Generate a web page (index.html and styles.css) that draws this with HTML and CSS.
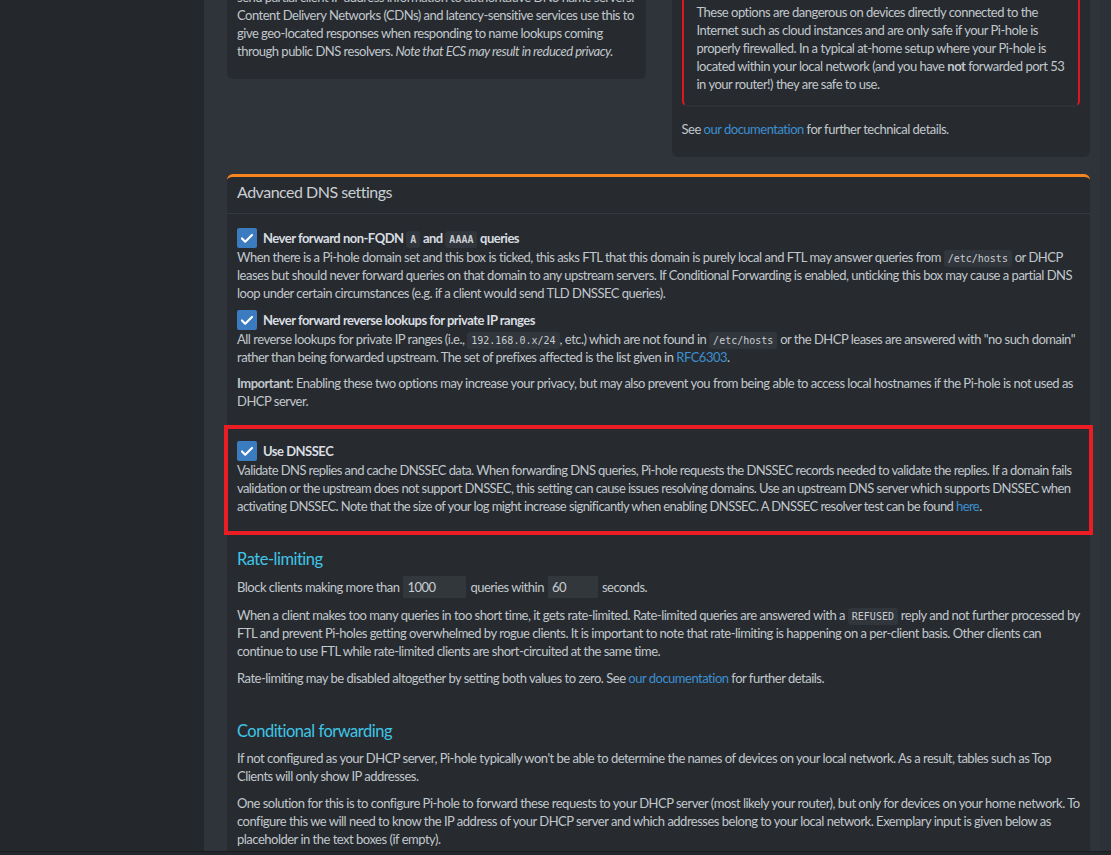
FILE: index.html
```html
<!DOCTYPE html>
<html lang="en">
<head>
    <meta charset="UTF-8">
    <meta name="viewport" content="width=device-width, initial-scale=1.0">
    <title>Settings - DNS</title>
    <link rel="stylesheet" href="styles.css">
</head>
<body>

<aside class="sidebar"></aside>

<main class="content">
    <div class="top-row">
        <div class="box">
            <div class="box-body">
                <div class="check-row">
                    <span class="checkbox"><svg viewBox="0 0 20 20"><path d="M5 10.5l3.2 3.2L15 7" /></svg></span>
                    <label>Use EDNS(0) Client Subnet</label>
                </div>
                <p class="last">send partial client IP address information to authoritative DNS name servers. Content Delivery Networks (CDNs) and latency-sensitive services use this to give geo-located responses when responding to name lookups coming through public DNS resolvers. <em>Note that ECS may result in reduced privacy.</em></p>
            </div>
        </div>

        <div class="box">
            <div class="box-body">
                <div class="callout">
                    <h4>Important</h4>
                    <p>These options are dangerous on devices directly connected to the Internet such as cloud instances and are only safe if your Pi-hole is properly firewalled. In a typical at-home setup where your Pi-hole is located within your local network (and you have <strong>not</strong> forwarded port 53 in your router!) they are safe to use.</p>
                </div>
                <p class="last">See <a href="#">our documentation</a> for further technical details.</p>
            </div>
        </div>
    </div>

    <div class="box box-warning">
        <div class="box-header">
            <h3>Advanced DNS settings</h3>
        </div>
        <div class="box-body">
            <div class="option">
                <div class="check-row">
                    <span class="checkbox"><svg viewBox="0 0 20 20"><path d="M5 10.5l3.2 3.2L15 7" /></svg></span>
                    <label>Never forward non-FQDN <code>A</code> and <code>AAAA</code> queries</label>
                </div>
                <p>When there is a Pi-hole domain set and this box is ticked, this asks FTL that this domain is purely local and FTL may answer queries from <code>/etc/hosts</code> or DHCP leases but should never forward queries on that domain to any upstream servers. If Conditional Forwarding is enabled, unticking this box may cause a partial DNS loop under certain circumstances (e.g. if a client would send TLD DNSSEC queries).</p>
            </div>
            <div class="option">
                <div class="check-row">
                    <span class="checkbox"><svg viewBox="0 0 20 20"><path d="M5 10.5l3.2 3.2L15 7" /></svg></span>
                    <label>Never forward reverse lookups for private IP ranges</label>
                </div>
                <p>All reverse lookups for private IP ranges (i.e., <code>192.168.0.x/24</code>, etc.) which are not found in <code>/etc/hosts</code> or the DHCP leases are answered with "no such domain" rather than being forwarded upstream. The set of prefixes affected is the list given in <a href="#">RFC6303</a>.</p>
            </div>
            <p><strong>Important</strong>: Enabling these two options may increase your privacy, but may also prevent you from being able to access local hostnames if the Pi-hole is not used as DHCP server.</p>

            <div class="option highlight">
                <div class="check-row">
                    <span class="checkbox"><svg viewBox="0 0 20 20"><path d="M5 10.5l3.2 3.2L15 7" /></svg></span>
                    <label>Use DNSSEC</label>
                </div>
                <p>Validate DNS replies and cache DNSSEC data. When forwarding DNS queries, Pi-hole requests the DNSSEC records needed to validate the replies. If a domain fails validation or the upstream does not support DNSSEC, this setting can cause issues resolving domains. Use an upstream DNS server which supports DNSSEC when activating DNSSEC. Note that the size of your log might increase significantly when enabling DNSSEC. A DNSSEC resolver test can be found <a href="#">here</a>.</p>
            </div>

            <div class="setting-group">
                <h4 class="section-title">Rate-limiting</h4>
                <div class="inline-form">
                    Block clients making more than
                    <input type="text" class="num-input" value="1000">
                    queries within
                    <input type="text" class="num-input short" value="60">
                    seconds.
                </div>
                <p>When a client makes too many queries in too short time, it gets rate-limited. Rate-limited queries are answered with a <code>REFUSED</code> reply and not further processed by FTL and prevent Pi-holes getting overwhelmed by rogue clients. It is important to note that rate-limiting is happening on a per-client basis. Other clients can continue to use FTL while rate-limited clients are short-circuited at the same time.</p>
                <p>Rate-limiting may be disabled altogether by setting both values to zero. See <a href="#">our documentation</a> for further details.</p>
            </div>

            <div class="setting-group">
                <h4 class="section-title">Conditional forwarding</h4>
                <p>If not configured as your DHCP server, Pi-hole typically won't be able to determine the names of devices on your local network. As a result, tables such as Top Clients will only show IP addresses.</p>
                <p>One solution for this is to configure Pi-hole to forward these requests to your DHCP server (most likely your router), but only for devices on your home network. To configure this we will need to know the IP address of your DHCP server and which addresses belong to your local network. Exemplary input is given below as placeholder in the text boxes (if empty).</p>
            </div>
        </div>
    </div>
</main>

<div class="scrollbar"></div>
<div class="window-edge"></div>

</body>
</html>
```

FILE: styles.css
```css
html, body { height: 100%; }
body { margin: 0; display: flex; overflow: hidden; background-color: #2f343a; color: #c1c7cc; font-family: "Lato", "Liberation Sans", sans-serif; font-size: 13px; letter-spacing: -0.5px; line-height: 18px; }

.sidebar { width: 204px; flex-shrink: 0; background-color: #24272b; }
.content { flex: 1; padding: 0 10px 0 23px; }
.scrollbar { width: 11px; flex-shrink: 0; background-color: #2c3137; }
.window-edge { position: fixed; left: 0; right: 0; bottom: 0; height: 3px; background-color: #23262a; border-top: 1px solid #1a1c1f; }

p { margin: 0 0 9px; }
a { color: #3d8fd1; text-decoration: none; }
strong, label { font-weight: bold; }
code { font-family: "DejaVu Sans Mono", monospace; font-size: 10px; line-height: 1; letter-spacing: 0; background-color: #31363c; color: #c9cdd1; padding: 3px 4px; border-radius: 3px; }

/* Boxes */
.top-row { display: grid; grid-template-columns: 1fr 1fr; column-gap: 26px; align-items: start; margin: -42px 0 17px; }
.box { background-color: #272b30; border-radius: 6px; }
.box-body { padding: 10px 10px 10px; }
.box-body p.last { margin-bottom: 9px; }
.box-warning { border-top: 3px solid #f7851f; }
.box-header { padding: 5px 10px 11px; border-bottom: 1px solid #34393f; }
.box-header h3 { margin: 0; font-size: 16px; line-height: 20px; font-weight: normal; color: #c9ced3; }

.callout { border: 2px solid #e0161c; border-top-color: #2d3136; border-bottom-color: #2d3136; border-radius: 6px; padding: 10px 13px 12px; margin-bottom: 13px; }
.callout h4 { margin: 0 0 3px; font-size: 14px; line-height: 20px; }
.callout p { margin: 0; }

/* Options */
.option { margin-top: 4px; }
.option p { margin-bottom: 8px; }
.check-row { display: flex; align-items: center; gap: 6px; height: 20px; color: #d9dde1; }
.checkbox { width: 20px; height: 20px; background-color: #3b7bbf; border-radius: 2px; display: flex; }
.checkbox svg { width: 20px; height: 20px; fill: none; stroke: #fff; stroke-width: 2.2; stroke-linecap: round; stroke-linejoin: round; }

.highlight { border: 4px solid #ea1c24; margin: 15px -13px 0; padding: 12px 9px 16px; }
.highlight p { margin: 0; letter-spacing: -0.58px; }

/* Sections */
.section-title { margin: 14px 0 7px; font-size: 16.5px; line-height: 20px; font-weight: normal; color: #3fc5e6; }
.setting-group { margin-bottom: 34px; }
.setting-group + .setting-group .section-title { margin-top: 0; margin-bottom: 8px; }

.inline-form { display: flex; align-items: center; gap: 4px; margin-bottom: 8px; height: 22px; }
.num-input { width: 63px; height: 22px; box-sizing: border-box; border: none; background-color: #32373c; color: #c8ccd0; font-family: inherit; font-size: 13px; letter-spacing: -0.5px; padding: 0 4px; }
.num-input.short { width: 50px; }
```
